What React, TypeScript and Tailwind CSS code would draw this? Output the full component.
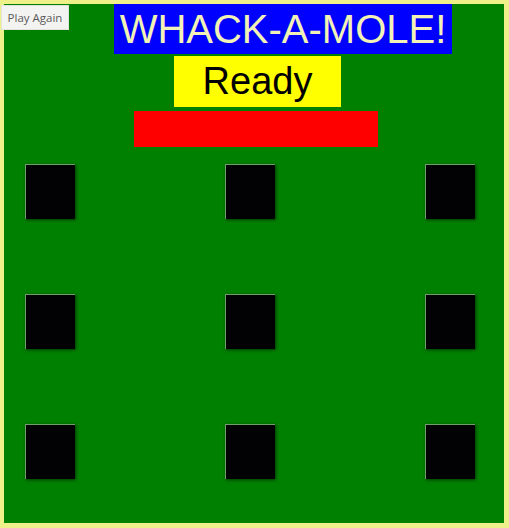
import React from 'react';

const holes = [0, 1, 2, 3, 4, 5, 6, 7, 8];

export default function App() {
  return (
    <div className="relative w-[509px] h-[528px] bg-[#eef08a] pt-[4px] pl-[4px] font-['Liberation_Sans',Arial,sans-serif]">
      {/* restart button sits over the corner */}
      <button className="absolute left-[1px] top-[5px] w-[68px] h-[25px] bg-[#f3f3f1] border border-[#e2e2da] text-[11.5px] text-[#5a5a5a] font-['Open_Sans',sans-serif] leading-none">
        Play Again
      </button>

      <div className="w-[500px] h-[519px] bg-[#008000] flex flex-col items-start">
        <div className="ml-[110px] w-[338px] h-[50px] bg-[#0000ff] text-[40px] leading-[50px] text-[#f2f2b6] text-center">
          WHACK-A-MOLE!
        </div>
        <div className="mt-[2px] ml-[170px] w-[167px] h-[51px] bg-[#ffff00] text-[38px] leading-[51px] text-black text-center">
          Ready
        </div>
        <div className="mt-[4px] ml-[130px] w-[244px] h-[36px] bg-[#ff0000]" />

        {/* mole holes */}
        <div className="mt-[17px] ml-[21px] grid grid-cols-[50px_50px_50px] gap-x-[150px] gap-y-[75px]">
          {holes.map(h => (
            <div
              key={h}
              className="w-[50px] h-[55px] bg-[#020204] border-t border-l border-[#6f9f6a] shadow-[1px_1px_3px_rgba(0,40,0,0.8)]"
            />
          ))}
        </div>
      </div>
    </div>
  );
}
